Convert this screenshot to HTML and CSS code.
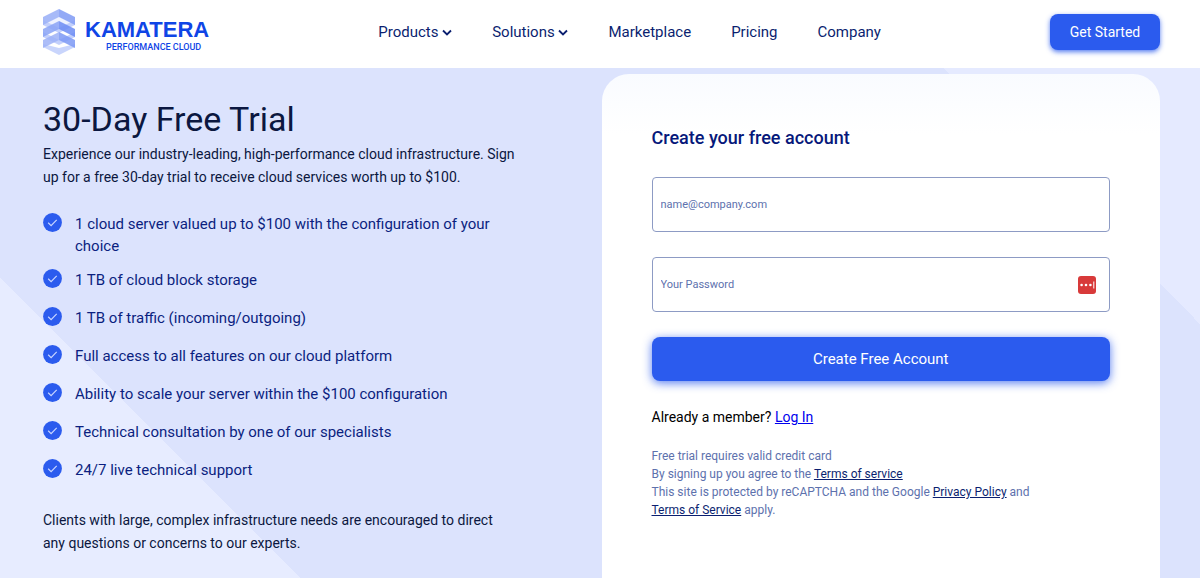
FILE: index.html
```html
<!DOCTYPE html>
<html lang="en">
<head>
  <meta charset="UTF-8">
  <meta name="viewport" content="width=device-width, initial-scale=1.0">
  <title>Kamatera - 30-Day Free Trial</title>
  <link rel="stylesheet" href="styles.css">
</head>
<body>
  <svg class="sprite" width="0" height="0" aria-hidden="true">
    <symbol id="check" viewBox="0 0 19 19">
      <circle cx="9.5" cy="9.5" r="9.4" fill="#2b5bee"/>
      <path d="M5.2 9.8l2.9 2.8 5.6-5.7" fill="none" stroke="#c9d5ff" stroke-width="1.2"/>
    </symbol>
    <symbol id="chevron" viewBox="0 0 10 8">
      <path d="M1 1.500l4 4 4-4" fill="none" stroke="#0b1f70" stroke-width="1.8"/>
    </symbol>
  </svg>

  <header class="header">
    <a class="logo" href="#" aria-label="Kamatera Performance Cloud">
      <svg class="logo-mark" viewBox="0 0 34 48" aria-hidden="true">
        <!-- light undersides -->
        <path d="M1 16l16-7 16 7-16 8z" fill="#eef2ff"/>
        <path d="M1 12l16 8 16-8v5l-16 8-16-8z" fill="#c3d0fc"/>
        <path d="M1 24l16 8 16-8v5l-16 8-16-8z" fill="#c3d0fc"/>
        <path d="M1 36l16 4 16-4v3l-16 8-16-8z" fill="#c9d5fc"/>
        <!-- roofs -->
        <path d="M17 1v8L1 17V9z" fill="#9db2f7" opacity=".9"/>
        <path d="M17 1v8l16 8V9z" fill="#86a0f5" opacity=".9"/>
        <path d="M17 13v8L1 29v-8z" fill="#8aa3f6" opacity=".85"/>
        <path d="M17 13v8l16 8v-8z" fill="#6c8cf3" opacity=".85"/>
        <path d="M17 24v8L1 40v-8z" fill="#9db2f7" opacity=".85"/>
        <path d="M17 24v8l16 8v-8z" fill="#7d99f4" opacity=".85"/>
      </svg>
      <span class="logo-text">
        <span class="logo-name">KAMATERA</span>
        <span class="logo-tagline">PERFORMANCE CLOUD</span>
      </span>
    </a>
    <nav class="nav">
      <a href="#">Products <svg class="chevron"><use href="#chevron"/></svg></a>
      <a href="#">Solutions <svg class="chevron"><use href="#chevron"/></svg></a>
      <a href="#">Marketplace</a>
      <a href="#">Pricing</a>
      <a href="#">Company</a>
    </nav>
    <button type="button" class="get-started">Get Started</button>
  </header>

  <main class="hero">
    <section class="offer">
      <h1>30-Day Free Trial</h1>
      <p>Experience our industry-leading, high-performance cloud infrastructure. Sign up for a free 30-day trial to receive cloud services worth up to $100.</p>
      <ul class="benefits">
        <li><svg class="check"><use href="#check"/></svg><span>1 cloud server valued up to $100 with the configuration of your choice</span></li>
        <li><svg class="check"><use href="#check"/></svg><span>1 TB of cloud block storage</span></li>
        <li><svg class="check"><use href="#check"/></svg><span>1 TB of traffic (incoming/outgoing)</span></li>
        <li><svg class="check"><use href="#check"/></svg><span>Full access to all features on our cloud platform</span></li>
        <li><svg class="check"><use href="#check"/></svg><span>Ability to scale your server within the $100 configuration</span></li>
        <li><svg class="check"><use href="#check"/></svg><span>Technical consultation by one of our specialists</span></li>
        <li><svg class="check"><use href="#check"/></svg><span>24/7 live technical support</span></li>
      </ul>
      <p>Clients with large, complex infrastructure needs are encouraged to direct any questions or concerns to our experts.</p>
    </section>

    <form class="signup">
      <h2>Create your free account</h2>
      <input type="email" class="field" placeholder="name@company.com" aria-label="Email">
      <div class="password">
        <input type="password" class="field" placeholder="Your Password" aria-label="Password">
        <svg class="password-icon" viewBox="0 0 18 18" aria-hidden="true">
          <rect width="18" height="18" rx="3" fill="#d83a3a"/>
          <circle cx="3.6" cy="9" r="1.3" fill="#fff"/>
          <circle cx="8" cy="9" r="1.3" fill="#fff"/>
          <circle cx="12.4" cy="9" r="1.3" fill="#fff"/>
          <path d="M15.8 5.500v7" stroke="#fff" stroke-width="1"/>
        </svg>
      </div>
      <button type="submit" class="submit">Create Free Account</button>
      <p class="member">Already a member? <a href="#">Log In</a></p>
      <p class="terms">Free trial requires valid credit card</p>
      <p class="terms">By signing up you agree to the <a href="#">Terms of service</a></p>
      <p class="terms">This site is protected by reCAPTCHA and the Google <a href="#">Privacy Policy</a> and <a href="#">Terms&nbsp;of&nbsp;Service</a> apply.</p>
    </form>
  </main>
</body>
</html>
```
FILE: styles.css
```css
* {
  box-sizing: border-box;
}

body {
  margin: 0;
  min-height: 100vh;
  display: flex;
  flex-direction: column;
  font-family: Roboto, "Liberation Sans", sans-serif;
  font-size: 14px;
  color: #0b1740;
  background-color: #fff;
}

h1, h2, p, ul {
  margin: 0;
  padding: 0;
}

button {
  font-family: inherit;
  color: #fff;
  background-color: #2b5bee;
  border: none;
  border-radius: 8px;
  cursor: pointer;
}

.sprite {
  position: absolute;
}

/* Header */
.header {
  display: flex;
  justify-content: space-between;
  align-items: center;
  height: 68px;
  padding: 0 40px 4px 42px;
}

.logo {
  display: flex;
  align-items: center;
  gap: 9px;
  color: #0f45e6;
  text-decoration: none;
}

.logo-mark {
  width: 34px;
  height: 48px;
}

.logo-text {
  display: flex;
  flex-direction: column;
  align-items: flex-end;
  padding-top: 8px;
}

.logo-name {
  font-family: "Liberation Sans", Arial, sans-serif;
  font-size: 22px;
  line-height: 22px;
  font-weight: bold;
}

.logo-tagline {
  font-size: 9px;
  line-height: 12px;
  font-weight: 500;
  padding-right: 8px;
}

.nav {
  display: flex;
  gap: 40px;
}

.nav a {
  color: #0b1f70;
  font-size: 15px;
  text-decoration: none;
}

.chevron {
  width: 10px;
  height: 8px;
}

.get-started {
  width: 110px;
  height: 36px;
  padding: 0;
  font-size: 14px;
  box-shadow: 0 2px 5px rgba(43, 91, 238, 0.8);
}

/* Hero */
.hero {
  flex: 1;
  display: grid;
  grid-template-columns: 1fr 1fr;
  padding: 6px 40px 0 43px;
  background-color: #dce3fd;
  background-image:
    linear-gradient(45deg, #e7ecff 50%, transparent 50%),
    linear-gradient(45deg, transparent 50%, #e5eaff 50%);
  background-size: 301px 301px, 256px 256px;
  background-position: left bottom, right top;
  background-repeat: no-repeat;
}

.offer {
  padding: 25px 84px 16px 0;
}

.offer h1 {
  font-size: 34px;
  line-height: 40px;
  font-weight: 400;
  margin-bottom: 4px;
}

.offer p {
  line-height: 23px;
}

.benefits {
  display: flex;
  flex-direction: column;
  gap: 12px;
  margin: 24px 0;
  list-style: none;
  font-size: 15px;
  line-height: 22px;
  color: #0b1f80;
}

.benefits li {
  display: flex;
  gap: 13px;
  min-height: 26px;
}

.check {
  flex: none;
  width: 19px;
  height: 19px;
}

/* Signup card */
.signup {
  display: flex;
  flex-direction: column;
  padding: 52px 50px 0;
  border-radius: 27px 27px 0 0;
  background: linear-gradient(#f9fbff, #fff 60px);
}

.signup h2 {
  font-size: 18px;
  line-height: 24px;
  font-weight: 500;
  color: #06187a;
  margin-bottom: 27px;
}

.field {
  width: 100%;
  height: 55px;
  padding: 0 8px;
  border: 1px solid #8d9bc4;
  border-radius: 4px;
  background-color: #fff;
  font-family: inherit;
  font-size: 11px;
}

.field::placeholder {
  color: #5d71ad;
}

.password {
  position: relative;
  margin: 25px 0;
}

.password-icon {
  position: absolute;
  right: 14px;
  top: 19px;
  width: 18px;
  height: 18px;
}

.submit {
  height: 44px;
  font-size: 15px;
  box-shadow: 0 2px 10px rgba(43, 91, 238, 0.8);
}

.member {
  margin: 26px 0 20px;
  line-height: 20px;
  color: #000;
}

.member a {
  color: #0000ee;
}

.terms {
  font-size: 12px;
  line-height: 18px;
  color: #5d71ad;
}

.terms a {
  color: #0b1f70;
}
```
